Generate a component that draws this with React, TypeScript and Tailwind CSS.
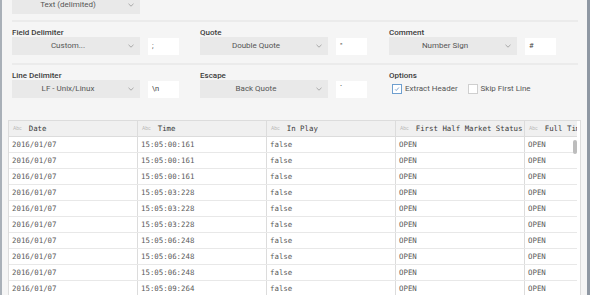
import { useState } from 'react';

const rows = [
  ['2016/01/07', '15:05:00:161', 'false', 'OPEN', 'OPEN'],
  ['2016/01/07', '15:05:00:161', 'false', 'OPEN', 'OPEN'],
  ['2016/01/07', '15:05:00:161', 'false', 'OPEN', 'OPEN'],
  ['2016/01/07', '15:05:03:228', 'false', 'OPEN', 'OPEN'],
  ['2016/01/07', '15:05:03:228', 'false', 'OPEN', 'OPEN'],
  ['2016/01/07', '15:05:03:228', 'false', 'OPEN', 'OPEN'],
  ['2016/01/07', '15:05:06:248', 'false', 'OPEN', 'OPEN'],
  ['2016/01/07', '15:05:06:248', 'false', 'OPEN', 'OPEN'],
  ['2016/01/07', '15:05:06:248', 'false', 'OPEN', 'OPEN'],
  ['2016/01/07', '15:05:09:264', 'false', 'OPEN', 'OPEN'],
];

const columns = ['Date', 'Time', 'In Play', 'First Half Market Status', 'Full Time Market Status'];

function Chevron() {
  return (
    <svg className="w-[6px] h-[4px] text-[#a0a0a0]" viewBox="0 0 6 4" fill="none" stroke="currentColor">
      <path d="M0.5 0.8L3 3.2L5.5 0.8" strokeWidth={0.9} />
    </svg>
  );
}

function Select({ value, width = 'w-[128px]' }: { value: string; width?: string }) {
  return (
    <div className={`${width} h-[18px] bg-[#e9e9e9] flex items-center shrink-0`}>
      <span className="flex-1 text-center pl-[2px] text-[8px] text-[#555]">{value}</span>
      <span className="w-[18px] flex justify-center">
        <Chevron />
      </span>
    </div>
  );
}

function Field({ label, select, value }: { label: string; select: string; value: string }) {
  return (
    <div className="flex flex-col">
      <div className="h-[9px] leading-[9px] text-[8px] font-medium text-[#3c3c3c]">{label}</div>
      <div className="flex items-center gap-[8px]">
        <Select value={select} />
        <div className="w-[31px] h-[17px] bg-white text-[7.5px] text-[#444] pl-[4px] flex items-center">{value}</div>
      </div>
    </div>
  );
}

function Checkbox({ checked, label }: { checked: boolean; label: string }) {
  return (
    <label className="flex items-center gap-[3px]">
      <span
        className={`w-[10px] h-[10px] bg-white flex items-center justify-center border ${
          checked ? 'border-[#6e9fcf]' : 'border-[#cfcfcf]'
        }`}
      >
        {checked && (
          <svg viewBox="0 0 8 8" className="w-[6px] h-[6px]" fill="none" stroke="#4f86c0">
            <path d="M1.5 4.5L3 6L6.5 2" strokeWidth={1} />
          </svg>
        )}
      </span>
      <span className="text-[8px] text-[#555]">{label}</span>
    </label>
  );
}

export default function App() {
  const [extract] = useState(true);

  return (
    <div className="w-[590px] h-[295px] overflow-hidden bg-[#f5f5f5] flex" style={{ fontFamily: 'Roboto, "Noto Sans", sans-serif' }}>
      <div className="w-[2px] bg-[#a9b0b8] shrink-0" />
      <div className="flex-1 min-w-0 flex flex-col pl-[6px] pr-[6px]">
        <div className="pl-[4px] pr-[3px]">
          <div className="mt-[-4px]">
            <Select value="Text (delimited)" />
          </div>
          <div className="mt-[6px] h-[2px] bg-[#ebebeb]" />

          <div className="mt-[6px] grid grid-cols-[188px_189px_1fr]">
            <Field label="Field Delimiter" select="Custom..." value=";" />
            <Field label="Quote" select="Double Quote" value={'"'} />
            <Field label="Comment" select="Number Sign" value="#" />
          </div>

          <div className="mt-[8px] h-[2px] bg-[#ebebeb]" />

          <div className="mt-[6px] grid grid-cols-[188px_189px_1fr]">
            <Field label="Line Delimiter" select="LF - Unix/Linux" value="\n" />
            <Field label="Escape" select="Back Quote" value="`" />
            <div className="flex flex-col">
              <div className="h-[9px] leading-[9px] text-[8px] font-medium text-[#3c3c3c]">Options</div>
              <div className="h-[18px] flex items-center gap-[10px] pl-[3px]">
                <Checkbox checked={extract} label="Extract Header" />
                <Checkbox checked={false} label="Skip First Line" />
              </div>
            </div>
          </div>
        </div>

        <div
          className="mt-[22px] relative bg-white border-l border-r border-t border-[#dcdcdc] flex"
          style={{ fontFamily: '"DejaVu Sans Mono", monospace' }}
        >
          <div className="flex-1 min-w-0 overflow-hidden">
            <div className="flex h-[16px] bg-[#f0f0f0] border-b border-[#dcdcdc] w-[640px]">
              {columns.map((c) => (
                <div key={c} className="w-[129px] shrink-0 border-r border-[#dcdcdc] flex items-center pl-[4px] whitespace-nowrap overflow-hidden">
                  <span className="text-[5px] text-[#b8b8b8] mr-[7px]" style={{ fontFamily: 'Roboto, sans-serif' }}>
                    Abc
                  </span>
                  <span className="text-[7.4px] text-[#3a3a3a]">{c}</span>
                </div>
              ))}
            </div>
            {rows.map((r, i) => (
              <div key={i} className="flex h-[16px] border-b border-[#e8e8e8] w-[640px]">
                {r.map((v, j) => (
                  <div key={j} className="w-[129px] shrink-0 border-r border-[#dcdcdc] flex items-center pl-[3px] text-[7.4px] text-[#5a5a5a]">
                    {v}
                  </div>
                ))}
              </div>
            ))}
          </div>
          <div className="w-[3px] shrink-0 bg-white" />
          <div className="absolute right-[3px] top-[19px] w-[4px] h-[14px] rounded-full bg-[#bdbdbd]" />
        </div>
      </div>
      <div className="w-[3px] bg-[#8f98a3] shrink-0" />
    </div>
  );
}
